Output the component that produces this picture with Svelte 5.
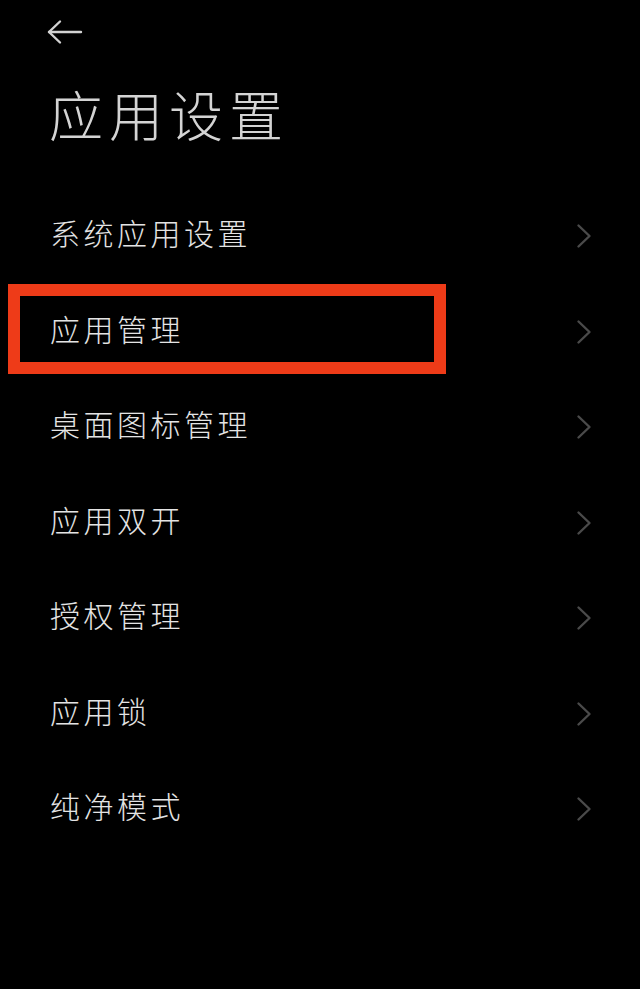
<script lang="ts">
  const items = ["系统应用设置", "应用管理", "桌面图标管理", "应用双开", "授权管理", "应用锁", "纯净模式"];
  // 红框标在第二行
  const marked = "应用管理";
</script>

<div class="page">
  <button class="back" aria-label="返回">
    <svg width="36" height="26" viewBox="0 0 36 26" fill="none" stroke="#d2d2d2" stroke-width="2.4" stroke-linecap="round" stroke-linejoin="round">
      <path d="M2 13H34" />
      <path d="M13 2.500L2 13L13 23.500" />
    </svg>
  </button>
  <h1>应用设置</h1>
  <div class="list">
    {#each items as item (item)}
      <div class="row">
        <span class="label">{item}</span>
        <svg class="chev" width="16" height="26" viewBox="0 0 16 26" fill="none" stroke="#4a4a4a" stroke-width="2.400" stroke-linecap="round" stroke-linejoin="round">
          <path d="M2.500 2.500L13.500 13L2.500 23.500" />
        </svg>
        {#if item === marked}
          <div class="mark"></div>
        {/if}
      </div>
    {/each}
  </div>
</div>

<style>
  :global(body) {
    margin: 0;
    background: #000;
  }
  .page {
    height: 989px;
    background: #000;
    color: #e4e4e4;
    font-family: "Noto Sans CJK SC", "Liberation Sans", sans-serif;
    overflow: hidden;
    box-sizing: border-box;
    padding: 19px 47px 0 50px;
  }
  .back {
    display: block;
    padding: 0;
    margin: 0 0 0 -3px;
    border: 0;
    background: none;
    height: 26px;
  }
  .back svg { display: block; }
  h1 {
    margin: 24px 0 0 -1px;
    font-size: 54px;
    line-height: 90px;
    font-weight: 300;
    letter-spacing: 6px;
    color: #d4d4d4;
  }
  .list {
    margin-top: 28px;
    display: flex;
    flex-direction: column;
  }
  .row {
    position: relative;
    height: 95.500px;
    display: flex;
    align-items: center;
    justify-content: space-between;
  }
  .label {
    font-size: 30px;
    font-weight: 300;
    letter-spacing: 3.500px;
    line-height: 40px;
    padding-bottom: 5px;
  }
  .chev { display: block; margin: 3px 1px 0 0; }
  .mark {
    position: absolute;
    left: -42px;
    top: 1px;
    width: 438px;
    height: 90px;
    box-sizing: border-box;
    border: 12.500px solid #ee3b18;
  }
</style>
